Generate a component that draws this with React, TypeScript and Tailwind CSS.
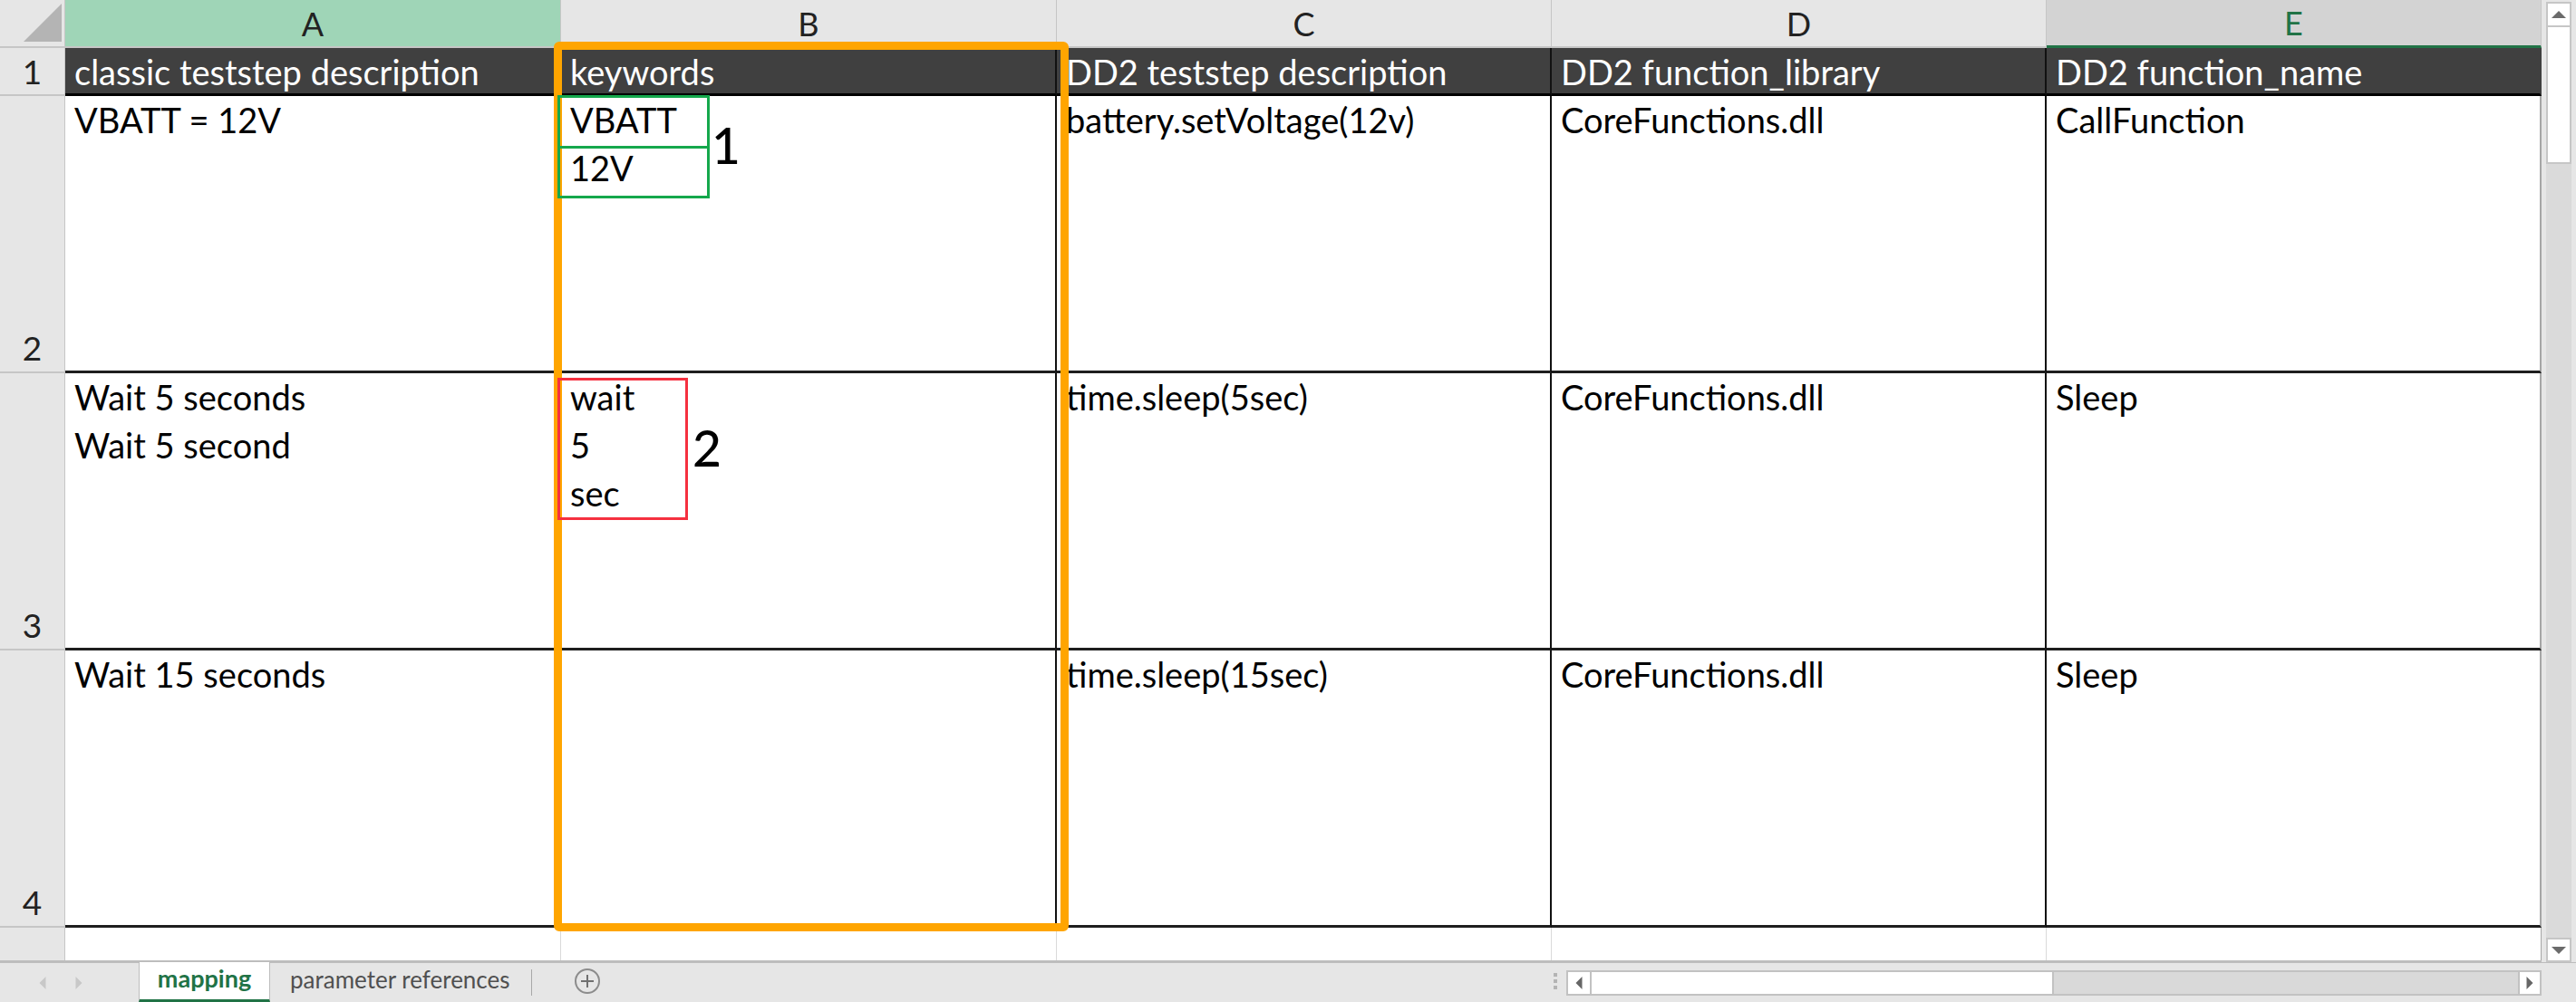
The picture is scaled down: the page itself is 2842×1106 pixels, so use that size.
import React from 'react';

const font = { fontFamily: 'Lato, "Noto Sans", sans-serif' };

type CellProps = {
  className?: string;
  children?: React.ReactNode;
};

const HeadCell = ({ className = '', children }: CellProps) => (
  <div className={`flex items-center justify-center border-r border-b-2 border-[#c6c6c6] text-[36px] text-[#222] ${className}`}>
    {children}
  </div>
);

const RowNum = ({ className = '', children }: CellProps) => (
  <div className={`w-[72px] flex justify-center border-r border-[#c6c6c6] bg-[#e6e6e6] text-[37px] text-[#222] leading-[53px] ${className}`}>
    {children}
  </div>
);

const Cell = ({ className = '', children }: CellProps) => (
  <div className={`pl-[10px] text-[38px] leading-[53px] whitespace-nowrap overflow-hidden ${className}`}>
    {children}
  </div>
);

const widths = ['w-[547px]', 'w-[547px]', 'w-[546px]', 'w-[546px]', 'w-[546px]'];

const dataRows: string[][][] = [
  [['VBATT = 12V'], ['VBATT', '12V'], ['battery.setVoltage(12v)'], ['CoreFunctions.dll'], ['CallFunction']],
  [['Wait 5 seconds', 'Wait 5 second'], ['wait', '5', 'sec'], ['time.sleep(5sec)'], ['CoreFunctions.dll'], ['Sleep']],
  [['Wait 15 seconds'], [], ['time.sleep(15sec)'], ['CoreFunctions.dll'], ['Sleep']],
];

const header = ['classic teststep description', 'keywords', 'DD2 teststep description', 'DD2 function_library', 'DD2 function_name'];

const Triangle = ({ dir, color = '#666', size = 12 }: { dir: 'left' | 'right'; color?: string; size?: number }) => {
  const pts = dir === 'left' ? '8,0 8,12 2,6' : '2,0 2,12 8,6';
  return (
    <svg width={size} height={size} viewBox="0 0 10 12">
      <polygon points={pts} fill={color} />
    </svg>
  );
};

const VScroll = () => (
  <div className="w-[38px] flex flex-col bg-[#e6e6e6] px-[5px] pt-[2px]">
    <div className="h-[28px] flex items-center justify-center bg-white border-2 border-[#c6c6c6]">
      <svg width="16" height="10" viewBox="0 0 16 10"><polygon points="0,9 16,9 8,1" fill="#6b6b6b" /></svg>
    </div>
    <div className="h-[151px] bg-white border-2 border-t-0 border-[#c6c6c6]" />
    <div className="flex-1 bg-[#dadada]" />
    <div className="h-[27px] flex items-center justify-center bg-white border-2 border-[#c6c6c6]">
      <svg width="16" height="10" viewBox="0 0 16 10"><polygon points="0,1 16,1 8,9" fill="#6b6b6b" /></svg>
    </div>
  </div>
);

const TabBar = () => (
  <div className="h-[44px] flex bg-[#e6e6e6] border-t border-[#bdbdbd]">
    <div className="w-[153px] flex items-center">
      <div className="ml-[40px]"><Triangle dir="left" color="#c8c8c8" size={14} /></div>
      <div className="ml-[26px]"><Triangle dir="right" color="#c8c8c8" size={14} /></div>
    </div>
    <div className="w-[145px] flex items-center justify-center bg-white border-x border-[#bdbdbd] border-b-[3px] border-b-[#217346] -mt-px text-[27px] font-bold text-[#217346] pb-[4px]">
      mapping
    </div>
    <div className="w-[288px] flex items-center pl-[22px] text-[26px] text-[#505050] pb-[6px]">
      parameter references
    </div>
    <div className="w-px my-[7px] bg-[#a8a8a8]" />
    <div className="w-[122px] flex items-center justify-center pb-[4px]">
      <svg width="30" height="30" viewBox="0 0 30 30">
        <circle cx="15" cy="15" r="13" fill="none" stroke="#8c8c8c" strokeWidth="2" />
        <line x1="15" y1="8" x2="15" y2="22" stroke="#707070" strokeWidth="2" />
        <line x1="8" y1="15" x2="22" y2="15" stroke="#707070" strokeWidth="2" />
      </svg>
    </div>
    <div className="flex-1" />
    <div className="w-[25px] flex flex-col items-center justify-center gap-[3px] pb-[4px]">
      <div className="w-[4px] h-[4px] bg-[#b4b4b4]" />
      <div className="w-[4px] h-[4px] bg-[#b4b4b4]" />
      <div className="w-[4px] h-[4px] bg-[#b4b4b4]" />
    </div>
    <div className="w-[1076px] h-[28px] mt-[8px] flex border-y-2 border-[#c2c2c2]">
      <div className="w-[28px] flex items-center justify-center bg-white border-x-2 border-[#c2c2c2]">
        <Triangle dir="left" color="#666" size={14} />
      </div>
      <div className="w-[510px] bg-white border-r-2 border-[#c2c2c2]" />
      <div className="flex-1 bg-[#d9d9d9]" />
      <div className="w-[26px] flex items-center justify-center bg-white border-x-2 border-[#c2c2c2]">
        <Triangle dir="right" color="#666" size={14} />
      </div>
    </div>
    <div className="w-[38px]" />
  </div>
);

export default function App() {
  return (
    <div className="w-[2842px] h-[1106px] flex flex-col bg-[#e6e6e6] overflow-hidden" style={font}>
      <div className="flex h-[1062px]">
        <div className="relative w-[2804px] flex flex-col">
          {/* column letters */}
          <div className="flex h-[53px]">
            <div className="w-[72px] flex items-end justify-end pr-[3px] pb-[5px] border-r border-b-2 border-[#c6c6c6] bg-[#e6e6e6]">
              <svg width="42" height="42" viewBox="0 0 42 42"><polygon points="42,0 42,42 0,42" fill="#b4b4b4" /></svg>
            </div>
            <HeadCell className="w-[547px] bg-[#9fd5b7]">A</HeadCell>
            <HeadCell className="w-[547px] bg-[#e6e6e6]">B</HeadCell>
            <HeadCell className="w-[546px] bg-[#e6e6e6]">C</HeadCell>
            <HeadCell className="w-[546px] bg-[#e6e6e6]">D</HeadCell>
            <HeadCell className="w-[546px] bg-[#d3d3d3] text-[#217346] border-b-[3px] border-b-[#217346]">E</HeadCell>
          </div>

          {/* header row 1 */}
          <div className="flex h-[53px]">
            <RowNum className="items-center border-b-2">1</RowNum>
            {header.map((h, i) => (
              <Cell
                key={h}
                className={`${widths[i]} bg-[#404040] text-white border-b-[3px] border-b-black border-r-2 ${i === 4 ? 'border-r-[#404040]' : 'border-r-[#111]'}`}
              >
                {h}
              </Cell>
            ))}
          </div>

          {/* data rows */}
          {dataRows.map((row, r) => (
            <div key={r} className="flex h-[306px]">
              <RowNum className="items-end border-b-2">{r + 2}</RowNum>
              {row.map((lines, i) => (
                <Cell
                  key={i}
                  className={`${widths[i]} bg-white text-black border-b-[3px] border-b-[#1e1e1e] border-r-2 ${i === 4 ? 'border-r-[#a6a6a6]' : 'border-r-[#111]'}`}
                >
                  {lines.map((l) => (
                    <div key={l}>{l}</div>
                  ))}
                </Cell>
              ))}
            </div>
          ))}

          {/* partial row 5 */}
          <div className="flex flex-1 border-b-2 border-[#bdbdbd]">
            <RowNum className="border-r" />
            {widths.map((w, i) => (
              <div key={i} className={`${w} bg-white border-r ${i === 4 ? 'border-[#a6a6a6]' : 'border-[#dadada]'}`} />
            ))}
          </div>

          {/* annotations drawn over the sheet */}
          <div className="absolute left-[611px] top-[46px] w-[568px] h-[982px] border-[9px] border-[#ffa500] rounded-[6px]" />
          <div className="absolute left-[615px] top-[105px] w-[168px] h-[59px] border-[3px] border-[#15a84c]" />
          <div className="absolute left-[615px] top-[161px] w-[168px] h-[58px] border-[3px] border-[#15a84c]" />
          <div className="absolute left-[785px] top-[133px] text-[55px] leading-none font-medium text-black">1</div>
          <div className="absolute left-[615px] top-[417px] w-[144px] h-[157px] border-[3px] border-[#f5303f]" />
          <div className="absolute left-[764px] top-[467px] text-[55px] leading-none font-medium text-black">2</div>
        </div>
        <VScroll />
      </div>
      <TabBar />
    </div>
  );
}
